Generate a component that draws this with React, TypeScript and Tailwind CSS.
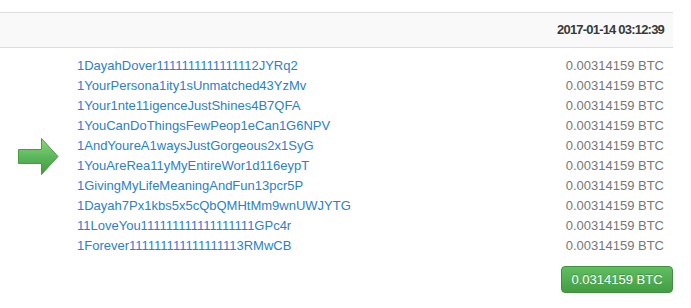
const outputs = [
  '1DayahDover' + '1'.repeat(15) + '2JYRq2',
  '1YourPersona1ity1sUnmatched43YzMv',
  '1Your1nte11igenceJustShines4B7QFA',
  '1YouCanDoThingsFewPeop1eCan1G6NPV',
  '1AndYoureA1waysJustGorgeous2x1SyG',
  '1YouAreRea11yMyEntireWor1d116eypT',
  '1GivingMyLifeMeaningAndFun13pcr5P',
  '1Dayah7Px1kbs5x5cQbQMHtMm9wnUWJYTG',
  '11LoveYou' + '1'.repeat(18) + 'GPc4r',
  '1Forever' + '1'.repeat(17) + '3RMwCB',
];

function Arrow() {
  return (
    <svg width="41" height="37" viewBox="0 0 41 37">
      <defs>
        <linearGradient id="arrowFill" x1="0" y1="0" x2="0" y2="1">
          <stop offset="0" stopColor="#8fd47f" />
          <stop offset="0.5" stopColor="#5cb85c" />
          <stop offset="1" stopColor="#3f9a3a" />
        </linearGradient>
      </defs>
      <path
        d="M0.5 11.5 H23.5 V0.5 L40 18.5 L23.5 36.5 V25.5 H0.5 Z"
        fill="url(#arrowFill)"
        stroke="#4a9a42"
        strokeWidth="1"
      />
    </svg>
  );
}

export default function App() {
  return (
    <div className="w-[691px] h-[308px] bg-white font-['Liberation_Sans',Arial,sans-serif]">
      <div className="w-[673px] pt-[12px]">
        <div className="h-[36px] bg-[#f9f9f9] border-y border-[#dddddd] flex items-center justify-end pr-[9px]">
          <span className="text-[13px] font-bold tracking-[-0.8px] text-[#3a3a3a]">2017-01-14 03:12:39</span>
        </div>

        <div className="flex mt-[8px]">
          <div className="w-[77px] flex items-center pl-[18px]">
            <Arrow />
          </div>
          <div className="flex-1 flex flex-col pr-[9px]">
            {outputs.map((addr) => (
              <div key={addr} className="h-[20px] flex items-center justify-between text-[13px]">
                <a href="#" className="text-[#2a80d0]">
                  {addr}
                </a>
                <span className="text-[#777777]">0.00314159 BTC</span>
              </div>
            ))}
          </div>
        </div>

        <div className="flex justify-end mt-[10px]">
          <button className="w-[112px] h-[27px] rounded-[4px] border border-[#3e8f3e] bg-gradient-to-b from-[#5fbf5f] to-[#449d44] text-white text-[13px] [text-shadow:0_-1px_0_rgba(0,0,0,0.2)]">
            0.0314159 BTC
          </button>
        </div>
      </div>
    </div>
  );
}
